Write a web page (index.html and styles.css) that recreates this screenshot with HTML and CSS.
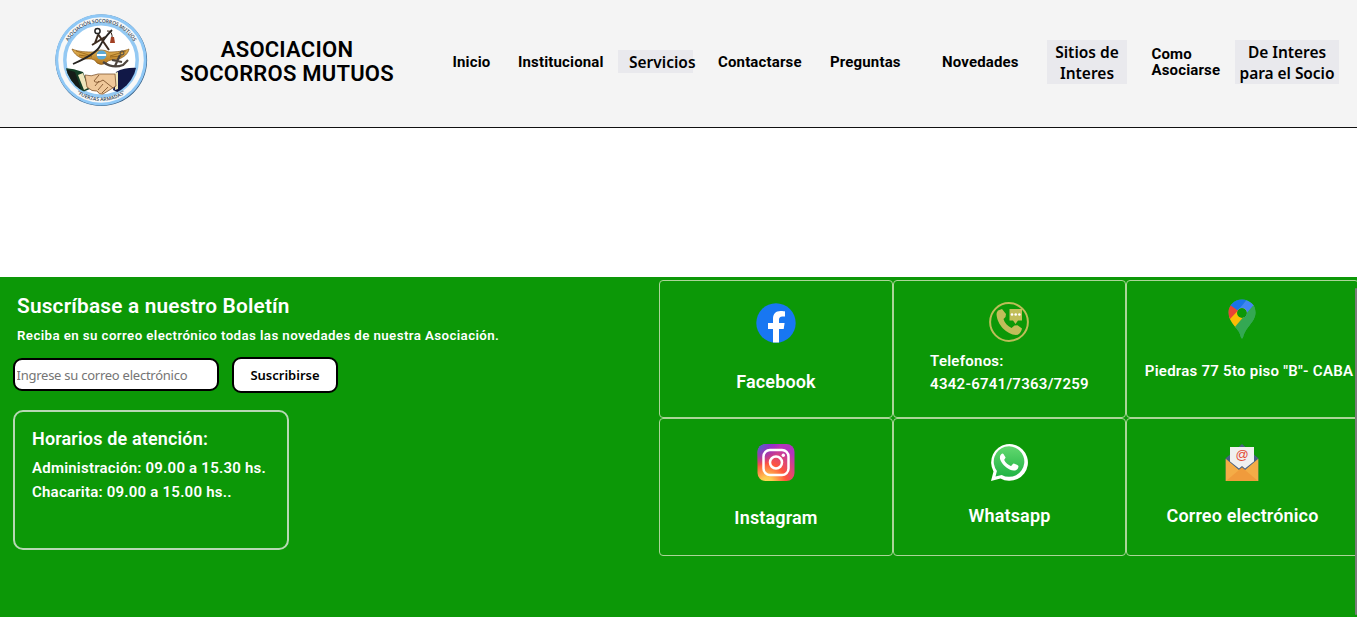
FILE: index.html
```
<!DOCTYPE html>
<html lang="es">
<head>
<meta charset="utf-8">
<title>Asociacion Socorros Mutuos</title>
<link rel="stylesheet" href="styles.css">
</head>
<body>
<header class="header">
  <svg class="logo" viewBox="0 0 94 94">
    <defs>
      <linearGradient id="wing" x1="0" y1="0" x2="0" y2="1"><stop offset="0" stop-color="#e4b455"/><stop offset="1" stop-color="#b0741c"/></linearGradient>
      <clipPath id="disc"><circle cx="47" cy="46" r="36"/></clipPath>
      <path id="arcTop" d="M9.500 46a37.500 37.500 0 0 1 75 0"/>
      <path id="arcBottom" d="M5 45a42 42 0 0 0 84 0"/>
    </defs>
    <circle cx="47.300" cy="46.300" r="45.800" fill="#315a80"/>
    <circle cx="47" cy="45.800" r="45.600" fill="#8fc8f6"/>
    <circle cx="47" cy="46" r="42.800" fill="#f7f8f8"/>
    <circle cx="47" cy="46" r="36.200" fill="#fff" stroke="#94c9f3" stroke-width="3.500"/>
    <text class="seal-text"><textPath href="#arcTop" startOffset="50%" text-anchor="middle" textLength="79">ASOCIACIÓN SOCORROS MUTUOS</textPath></text>
    <text class="seal-text"><textPath href="#arcBottom" startOffset="50%" text-anchor="middle" textLength="52">"FUERZAS ARMADAS"</textPath></text>
    <path d="M18 35c7 3 15 3 21 3q8-4 16 0c8 0 16-1 20-3-1 5-5 8-10 10-5 1-10 0-13 4q-5 3-9 0c-3-5-7-4-12-4-6-1-11-5-13-10z" fill="url(#wing)" stroke="#865615" stroke-width=".7"/>
    <path d="M22 37l16 5M25 41l13 2M72 37l-16 5M68 42l-12 1" stroke="#895713" stroke-width=".7"/>
    <ellipse cx="47.500" cy="41" rx="5" ry="4.500" fill="#5ba9d5"/><path d="M43 41h9" stroke="#fff" stroke-width="2"/>
    <path d="M58 16Q50 24 46 32T19 50" fill="none" stroke="#282522" stroke-width="1.800"/>
    <path d="M44 20l11 16M38 31l13-8M44 21l-3 8" stroke="#3d2c20" stroke-width="2"/>
    <circle cx="43.500" cy="17" r="2.600" fill="none" stroke="#222" stroke-width="1.500"/>
    <path d="M53 17q6-1 5 9" fill="none" stroke="#302013"/><path d="M57 23l3 0 1 6h-5z" fill="#a23f23"/>
    <path d="M49 48q10 7 20 3l5-5M66 41l-5 11M58 46l10 2" fill="none" stroke="#4d443d" stroke-width="2.200"/><circle cx="68" cy="39" r="2" fill="none" stroke="#444"/>
    <g clip-path="url(#disc)">
      <path d="M9 54q10 0 20 4l7 17-17 7z" fill="#143e26"/><path d="M8 54l13 4 6 17-10 3z" fill="#151c18"/>
      <path d="M85 54q-14-1-23 4l-3 18 17 8z" fill="#111847"/>
      <path d="M24 61l5-2 5 15-4 2zM61 59l3-1v17l-3 1z" fill="#eee6bc"/>
      <path d="M31 61q6 2 13-1l17 0 1 12-13 8q-4 1-6-3-5 1-10-4z" fill="#efc89a" stroke="#80552e" stroke-width=".8"/>
      <path d="M45 61l-5 6q3 3 9-1l10 8M41 72l4-5M44 76l5-6M48 79l6-6" fill="none" stroke="#80552e" stroke-width=".9"/>
    </g>
  </svg>
  <h1 class="brand">ASOCIACION<br>SOCORROS MUTUOS</h1>
  <nav class="nav">
    <a class="link inicio">Inicio</a>
    <a class="link institucional">Institucional</a>
    <button class="drop servicios">Servicios</button>
    <a class="link contactarse">Contactarse</a>
    <a class="link preguntas">Preguntas</a>
    <a class="link novedades">Novedades</a>
    <button class="drop sitios">Sitios de<br>Interes</button>
    <a class="link como">Como<br>Asociarse</a>
    <button class="drop socio">De Interes<br>para el Socio</button>
  </nav>
</header>
<main class="content"></main>
<footer class="footer">
  <section class="info">
    <h2 class="news-title">Suscríbase a nuestro Boletín</h2>
    <p class="news-text">Reciba en su correo electrónico todas las novedades de nuestra Asociación.</p>
    <form class="form"><input class="email" placeholder="Ingrese su correo electrónico"><button class="submit" type="button">Suscribirse</button></form>
    <div class="hours">
      <h3 class="hours-title">Horarios de atención:</h3>
      <p class="hours-line">Administración: 09.00 a 15.30 hs.</p>
      <p class="hours-line">Chacarita: 09.00 a 15.00 hs..</p>
    </div>
  </section>
  <section class="cards">
    <div class="card facebook">
      <svg class="icon" viewBox="0 0 40 40"><circle cx="20" cy="20" r="19.700" fill="#1877f2"/><path d="M17 39.500V26h-5v-6h5v-4.300c0-5 3-7.700 7.500-7.700 2.200 0 4.500.4 4.500.4v5h-2.600c-2.500 0-3.400 1.600-3.400 3.200V20h5.600l-.9 6H23v13.500z" fill="#fff"/></svg>
      <span class="label">Facebook</span>
    </div>
    <div class="card phone">
      <svg class="icon" viewBox="0 0 40 40"><circle cx="20" cy="20" r="18.900" fill="none" stroke="#bdbd59" stroke-width="2"/><path d="M9 8.500l4-1.500 4 5-.5 3-2 2c1 4 4 7 8 9l3-2.500 3-.2 4.500 3.200c-1 4-3 6.500-6 6.500C18 32.500 8 23 7.500 12q0-2 1.500-3.500z" fill="#c1bd5a"/><path d="M20.500 7H33v11.500h-4L26.500 22 24 18.500h-3.500z" fill="#c1bd5a"/><g fill="#fff"><circle cx="23" cy="12.500" r="1.300"/><circle cx="26.700" cy="12.500" r="1.300"/><circle cx="30.400" cy="12.500" r="1.300"/></g></svg>
      <span class="label small">Telefonos:<br>4342-6741/7363/7259</span>
    </div>
    <div class="card address">
      <svg class="icon" viewBox="0 0 40 40"><defs><clipPath id="pin"><path fill-rule="evenodd" clip-rule="evenodd" d="M20 .5C12 .5 6.500 6.500 6.500 13.500c0 5 2.500 9 6 13.500 4 5 5 6 6.500 11.500q1 2 2 0C22.500 33 24 31 27.500 26.500c3.500-4.500 6-8 6-13C33.500 6 28 .5 20 .5zM20 9a5 5 0 1 0 0 10 5 5 0 0 0 0-10z"/></clipPath></defs><g clip-path="url(#pin)"><path d="M0 0h40v40H0z" fill="#34a853"/><path d="M32 6L12.500 30 4 22 15 8z" fill="#fbbc04"/><path d="M9.500 5l7 6L8 20 3 15z" fill="#ea4335"/><path d="M8 6l8.500 6L25 0H12z" fill="#1a73e8"/><path d="M24.500 1L16 11.500l8 7L34 6.500z" fill="#4285f4"/><path d="M32 5.500L12 29l7 11h20V5z" fill="#34a853"/></g></svg>
      <span class="label small">Piedras 77 5to piso "B"- CABA</span>
    </div>
    <div class="card instagram">
      <svg class="icon" viewBox="0 0 40 40"><defs><radialGradient id="ig" cx=".25" cy="1.050" r="1.050"><stop stop-color="#ffdd55"/><stop offset=".15" stop-color="#ffca52"/><stop offset=".5" stop-color="#ff543e"/><stop offset="1" stop-color="#b333bd"/></radialGradient><radialGradient id="igb" cx="0" cy="0" r=".6"><stop stop-color="#3771c8"/><stop offset=".3" stop-color="#5d52ce" stop-opacity=".8"/><stop offset="1" stop-color="#6600ff" stop-opacity="0"/></radialGradient></defs><rect x="1.500" y="1" width="37" height="37" rx="8" fill="url(#ig)"/><rect x="1.500" y="1" width="37" height="37" rx="8" fill="url(#igb)"/><rect x="7.500" y="7" width="25" height="25" rx="6.500" fill="none" stroke="#fff" stroke-width="2.500"/><circle cx="20" cy="19.500" r="6" fill="none" stroke="#fff" stroke-width="2.500"/><circle cx="27.300" cy="12.300" r="1.700" fill="#fff"/></svg>
      <span class="label">Instagram</span>
    </div>
    <div class="card whatsapp">
      <svg class="icon" viewBox="0 0 40 40"><defs><linearGradient id="wa" x1="0" y1="0" x2="0" y2="1"><stop stop-color="#62d86f"/><stop offset="1" stop-color="#21b344"/></linearGradient></defs><path d="M2 38l2.500-9.500A18.400 18.400 0 1 1 11.500 35.500z" fill="#fff"/><path d="M6.500 33.500l1.400-5.600A15.300 15.300 0 1 1 12.700 32z" fill="url(#wa)"/><path d="M14.600 11.300c-.5-1-1.500-1-2.400-.1-2 2-1.500 5.300.2 7.700 3 4.600 7.200 8 12.500 8.600 2.300 0 4.500-1.400 4.600-4.300 0-.8-4.300-2.900-4.900-2.700-.8.200-2 2.600-2.800 2.600-2.300-.7-5.400-3.500-6.600-6-.2-.7 1.400-1.800 1.400-2.600z" fill="#fff"/></svg>
      <span class="label">Whatsapp</span>
    </div>
    <div class="card mail">
      <svg class="icon" viewBox="0 0 40 40"><path d="M4 15L20 1l16 14v22H4z" fill="#476082"/><path d="M8 4h24v29H8z" fill="#f0f0ef"/><path d="M3.700 15L17 25.500 20 23l3 2.500L36.300 15v23H3.700z" fill="#476082"/><path d="M3.700 15.800L17 27l3-2.500 3 2.500 13.300-11.200V38H3.700z" fill="#f4ac47"/><path d="M4 38l13-11 3-2.500 3 2.500 13 11z" fill="#f09b3c"/><text class="at" x="20" y="15.500">@</text></svg>
      <span class="label">Correo electrónico</span>
    </div>
  </section>
  <div class="scrollbar"></div>
</footer>
</body>
</html>
```

FILE: styles.css
```
* { box-sizing: border-box; }
body { margin: 0; overflow: hidden; font-family: Roboto, sans-serif; color: #000; }
h1, h2, h3, p { margin: 0; }
.header { height: 128px; display: flex; background: #f4f4f4; border-bottom: 1px solid #111; }
.logo { width: 94px; height: 94px; margin: 14px 0 0 54px; flex: none; }
.seal-text { font: 600 5px "Open Sans", sans-serif; fill: #304150; }
.brand { width: 222px; margin: 38px 0 0 28px; font-size: 22px; line-height: 24px; font-weight: 600; letter-spacing: .22px; text-align: center; }
.nav { height: 46px; margin: 39px 0 0 54.500px; display: flex; align-items: center; flex: none; }
.link { flex: none; font-size: 15px; line-height: 16px; font-weight: 700; letter-spacing: .15px; white-space: nowrap; }
.drop { flex: none; padding: 1px 0 0; border: 0; background: #e9e9ed; font: 600 15.500px/21px "Noto Sans", sans-serif; color: #000; white-space: nowrap; }
.inicio { width: 65.500px; }
.institucional { width: 100px; }
.servicios { width: 75px; height: 23px; margin-bottom: 1px; padding-top: 2px; padding-left: 11px; text-align: left; }
.contactarse { width: 112px; margin-left: 25px; }
.preguntas { width: 112px; }
.novedades { width: 105px; }
.sitios { width: 80px; height: 44px; }
.como { width: 83.500px; margin-left: 24.500px; }
.socio { width: 104px; height: 44px; letter-spacing: -.05px; }
.content { height: 149px; }
.footer { position: relative; display: flex; height: 340px; background: #0c9807; color: #fff; }
.info { width: 659px; padding: 16px 0 0 13px; flex: none; }
.news-title { padding-left: 4px; font-size: 20.800px; line-height: 26px; font-weight: 600; letter-spacing: .2px; }
.news-text { padding: 7px 0 0 4px; font-size: 13.300px; line-height: 20px; font-weight: 600; letter-spacing: .4px; }
.form { display: flex; align-items: center; gap: 13px; height: 36px; margin-top: 11px; }
.email { width: 206px; height: 33px; margin-bottom: 1px; padding: 1px 1px 1px 1.500px; border: 2px solid #000; border-radius: 9px; background: #fff; font: 13px "Noto Sans", sans-serif; letter-spacing: -.25px; }
.email::placeholder { color: #757575; }
.submit { width: 106px; height: 36px; padding: 0; border: 2px solid #000; border-radius: 9px; background: #fff; color: #000; font: 600 13px "Noto Sans", sans-serif; }
.hours { width: 276px; height: 140px; margin-top: 17px; padding: 14px 0 0 17px; border: 2px solid #b7d8b4; border-radius: 10px; }
.hours-title { margin-bottom: 5px; font-size: 18px; line-height: 25px; font-weight: 600; letter-spacing: .15px; }
.hours-line { font-size: 15px; line-height: 24px; font-weight: 600; letter-spacing: .22px; white-space: nowrap; }
.cards { display: grid; grid-template-columns: 234px 233px 233px; grid-template-rows: 138px 138px; margin-top: 3px; flex: none; }
.card { display: flex; flex-direction: column; align-items: center; padding-top: 22px; border: 1px solid #abd598; border-radius: 4px; }
.icon { width: 40px; height: 40px; flex: none; }
.label { margin-top: 26px; font-size: 18px; line-height: 24px; font-weight: 600; letter-spacing: .15px; white-space: nowrap; }
.small { font-size: 15px; line-height: 23px; letter-spacing: .25px; }
.facebook .label { margin-top: 27px; }
.phone { padding-top: 21px; }
.phone .icon, .whatsapp .icon { margin-right: 2px; }
.phone .label { margin-top: 8px; }
.address { padding-top: 18px; }
.address .icon, .mail .icon { margin-right: 1px; }
.address .label { margin-top: 21px; margin-left: 13px; }
.instagram { padding-top: 24px; }
.instagram .label { margin-top: 23px; }
.whatsapp, .mail { padding-top: 24px; }
.whatsapp .label, .mail .label { margin-top: 21px; }
.at { font: 13px "Liberation Sans", sans-serif; fill: #e34b35; text-anchor: middle; }
.scrollbar { position: absolute; right: 0; top: 11px; width: 2px; height: 327px; background: #7c7c7c; border-radius: 2px; }
```
